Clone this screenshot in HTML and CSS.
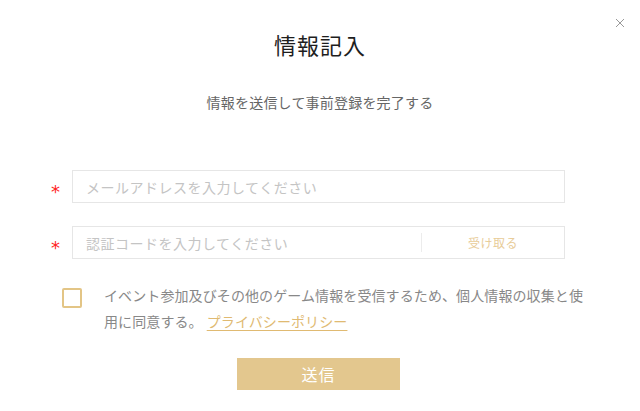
FILE: index.html
```html
<!DOCTYPE html>
<html lang="ja">
<head>
<meta charset="utf-8">
<link rel="stylesheet" href="styles.css">
</head>
<body>
<div class="modal">
  <button class="close" aria-label="close">
    <svg width="10" height="10" viewBox="0 0 10 10"><path d="M1 1L9 9M9 1L1 9" stroke="#999" stroke-width="1" fill="none"/></svg>
  </button>
  <h1 class="title">情報記入</h1>
  <p class="subtitle">情報を送信して事前登録を完了する</p>
  <div class="form">
    <div class="row">
      <span class="req">*</span>
      <div class="field"><span class="ph">メールアドレスを入力してください</span></div>
    </div>
    <div class="row">
      <span class="req">*</span>
      <div class="field">
        <span class="ph grow">認証コードを入力してください</span>
        <span class="sep"></span>
        <span class="get">受け取る</span>
      </div>
    </div>
    <div class="agree">
      <span class="check"></span>
      <p class="agree-text">イベント参加及びその他のゲーム情報を受信するため、個人情報の収集と使用に同意する。<a class="link">プライバシーポリシー</a></p>
    </div>
  </div>
  <div class="actions"><button class="submit">送信</button></div>
</div>
</body>
</html>
```
FILE: styles.css
```css
html, body { margin: 0; padding: 0; background: #fff; }
body { font-family: "Noto Sans CJK JP", "Noto Sans", sans-serif; width: 640px; height: 411px; overflow: hidden; }
.modal { position: relative; width: 640px; height: 411px; box-sizing: border-box; padding-top: 28px; }
.close { position: absolute; top: 18px; right: 15px; border: 0; background: none; padding: 0; width: 10px; height: 10px; display: block; }
.close svg { display: block; }
.title { margin: 0; text-align: center; font-size: 22px; line-height: 32px; font-weight: 400; color: #1e1e1e; letter-spacing: 1px; }
.subtitle { margin: 31px 0 0; text-align: center; font-size: 14px; line-height: 22px; color: #666; letter-spacing: 0.2px; }
.form { margin-top: 57px; padding-left: 48px; }
.row { display: flex; align-items: center; height: 33px; margin-bottom: 23px; }
.req { width: 24px; height: 33px; color: #f22; font-family: "DejaVu Sans", sans-serif; font-size: 18px; line-height: 18px; padding-top: 13px; box-sizing: border-box; padding-left: 3px; }
.field { width: 493px; height: 33px; box-sizing: border-box; border: 1px solid #e6e6e6; display: flex; align-items: center; padding-left: 13px; }
.ph { color: #c4c4c4; font-size: 14px; letter-spacing: 0.5px; }
.grow { flex: 1; }
.sep { width: 1px; height: 19px; background: #ececec; }
.get { width: 142px; text-align: center; color: #e8cc98; font-size: 12px; letter-spacing: 0.5px; }
.agree { display: flex; align-items: flex-start; margin-top: 1px; padding-left: 14px; }
.check { width: 20px; height: 20px; box-sizing: border-box; border: 2px solid #e3c586; border-radius: 2px; margin-top: 6px; flex: none; }
.agree-text { margin: 0 0 0 22px; width: 490px; font-size: 14px; line-height: 26px; color: #888; letter-spacing: 0.1px; }
.link { color: #e0ba72; text-decoration: underline; text-underline-offset: 3px; margin-left: 4px; }
.actions { display: flex; justify-content: center; margin-top: 24px; padding-right: 3px; }
.submit { width: 163px; height: 32px; border: 0; background: #e3c78e; color: #fff; font-family: inherit; font-size: 16px; letter-spacing: 1px; padding: 0; }
```
